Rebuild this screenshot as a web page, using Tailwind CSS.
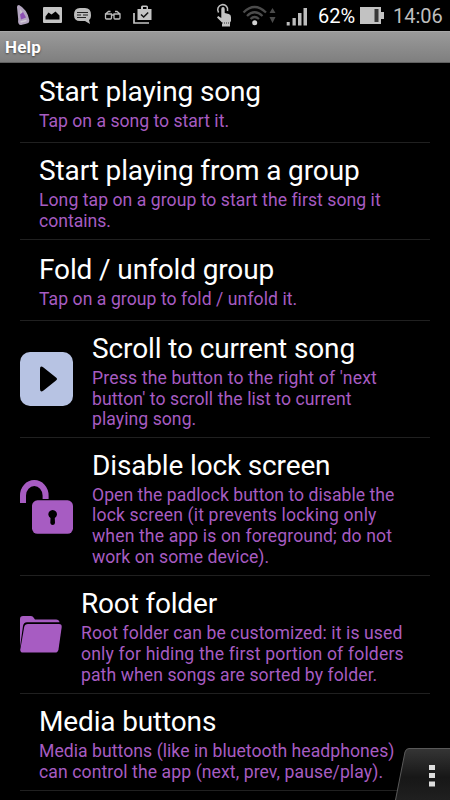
<!DOCTYPE html>
<html lang="en">
<head>
<meta charset="utf-8">
<title>Help</title>
<script src="https://cdn.jsdelivr.net/npm/@tailwindcss/browser@4"></script>
</head>
<body class="bg-black">
<div class="relative flex h-[800px] w-[450px] flex-col overflow-hidden bg-black font-[Roboto,sans-serif] text-white">
  <header class="flex h-[31px] shrink-0 items-center text-[#bebebe]">
    <svg class="h-[31px] w-[330px] shrink-0" viewBox="0 0 330 31" fill="none">
      <path d="M17 7Q17 5 19 5Q27 9 29.300 20Q29.500 23 27 23.500L21 25Q17.500 25 18.200 19Z" fill="#b3a5c0"/>
      <path d="M20 9l4 5-3.500 2z" fill="#c9c4ce"/><path d="M20 14.500l3-2.500 3 5.500-5 2z" fill="#8d50b4"/><path d="M20.500 22l6-1.500" stroke="#d2cdd6" stroke-width="1.500"/>
      <path fill="#c4c4c4" fill-rule="evenodd" d="M44 7h17q1 0 1 1v14q0 1-1 1H44q-1 0-1-1V8q0-1 1-1zM45.500 19.500h14v-4l-4-4-4 3-3-2-3 4z"/>
      <path fill="#bdbdbd" d="M80 8h5q6 0 6 7 0 4-2 5l1 4-5-3h-5q-6 0-6-6 0-7 6-7z"/>
      <path d="M77 12.500h11M77 15h4M83 15h5M77 17.500h9" stroke="#222" stroke-width="1.100"/>
      <path d="M105.500 14h6v4q0 1-1 1h-4q-1 0-1-1zM114 14h6v4q0 1-1 1h-4q-1 0-1-1zM111.500 15h2.500M105.500 14l3-2.500h2M120 14l-3-2.500h-2" stroke="#bdbdbd" stroke-width="1.300"/>
      <path d="M134 13v10h15" stroke="#c4c4c4" stroke-width="1.700"/>
      <path fill="#c4c4c4" fill-rule="evenodd" d="M137.500 9H141V7q0-1.500 1.500-1.500h4Q148 5.500 148 7v2h3.500v11h-14zM143 9h3.500V7H143z"/>
      <path d="M141 14.500l2.700 2.500 4.500-4.500" stroke="#111" stroke-width="1.500"/>
      <path d="M218.600 12.500A5 5 0 1 1 227.500 11" stroke="#bdbdbd" stroke-width="1.600"/>
      <path fill="#c4c4c4" d="M221.300 9q0-2 1.700-2T224.700 9v4l4 1q2.300.6 2.300 3v4l-1 1.500v4h-8v-4l-5-5 1.200-1.500 3.100 2z"/>
      <path d="M222 23h8.500" stroke="#333" stroke-dasharray="1 1"/>
      <g stroke="#4b4b4b" stroke-width="2.300"><path d="M243.500 12.500Q254.500 1.500 266 12.500M247 16Q254.500 8.500 262.500 16M250.500 19Q254.500 15 259 19"/></g>
      <circle cx="254.700" cy="22.700" r="2.500" fill="#d2d2d2"/>
      <path fill="#4b4b4b" d="M269.500 13l3-5 3 5zM269.500 17h6l-3 6z"/>
      <path fill="#bdbdbd" d="M286.700 22h3v3.500h-3zM292.500 18h3.300v7.500h-3.300zM298 13h3.500v12.500H298zM303.500 8h3.500v17.500h-3.500z"/>
    </svg>
    <span class="absolute left-[318px] top-[4px] text-[20px] leading-6 text-white">62%</span>
    <svg class="absolute left-[360px] top-[7px] h-[17px] w-6" viewBox="0 0 24 17"><path fill="#c2c2c2" d="M0 0h21v5h3v7h-3v5H0z"/><path fill="#383838" d="M14.500 2h4v13h-4z"/></svg>
    <span class="absolute left-[393px] top-[4px] text-[20px] leading-6">14:06</span>
  </header>
  <div class="flex h-8 shrink-0 items-center border-t border-b border-t-[#a8a8a8] border-b-[#606060] bg-linear-to-b from-[#9a9a9a] to-[#7f7f7f] pl-[5px] text-[17px] font-bold leading-5 tracking-[0.15px] [text-shadow:0_1px_2px_#444]">Help</div>
  <main class="flex flex-col px-5">
    <section class="flex h-20 shrink-0 items-center border-b border-[#202020] pl-[19px]">
      <div class="pt-[2px]"><h2 class="whitespace-nowrap text-[28px] leading-[33px] tracking-[-0.15px]">Start playing song</h2><p class="mt-[3px] whitespace-nowrap text-[17.6px] leading-[20.7px] text-[#a75cc2]">Tap on a song to start it.</p></div>
    </section>
    <section class="flex h-[97px] shrink-0 items-center border-b border-[#202020] pl-[19px]">
      <div class="pt-[3px]"><h2 class="whitespace-nowrap text-[28px] leading-[33px] tracking-[-0.12px]">Start playing from a group</h2><p class="mt-[3px] whitespace-nowrap text-[17.6px] leading-[20.7px] text-[#a75cc2]"><span class="tracking-[0.05px]">Long tap on a group to start the first song it</span><br>contains.</p></div>
    </section>
    <section class="flex h-[81px] shrink-0 items-center border-b border-[#202020] pl-[19px]">
      <div class="pt-[3px]"><h2 class="whitespace-nowrap text-[28px] leading-[33px] tracking-[-0.12px]">Fold / unfold group</h2><p class="mt-[3px] whitespace-nowrap text-[17.6px] leading-[20.7px] tracking-[0.06px] text-[#a75cc2]">Tap on a group to fold / unfold it.</p></div>
    </section>
    <section class="flex h-[117px] shrink-0 items-center gap-[19px] border-b border-[#202020]">
      <svg class="h-[54px] w-[53px] shrink-0" viewBox="0 0 53 54"><rect width="53" height="54" rx="10" fill="#b7c3e3"/><path d="M20 17Q20 13 23.500 15.500L36 25.500Q38 27 36 28.500L23.500 38.500Q20 41 20 37z"/></svg>
      <div class="pt-[4px]"><h2 class="whitespace-nowrap text-[28px] leading-[33px] tracking-[-0.12px]">Scroll to current song</h2><p class="mt-[3px] whitespace-nowrap text-[17.6px] leading-[20.7px] text-[#a75cc2]"><span class="tracking-[0.16px]">Press the button to the right of 'next</span><br><span class="tracking-[0.08px]">button' to scroll the list to current</span><br><span class="tracking-[0.06px]">playing song.</span></p></div>
    </section>
    <section class="flex h-[138px] shrink-0 items-center gap-[19px] border-b border-[#202020]">
      <svg class="h-[54px] w-[53px] shrink-0" viewBox="0 0 53 54"><path d="M3 23V15.500A11.300 12.500 0 0 1 25.600 15.500V19" fill="none" stroke="#a75cc2" stroke-width="6"/><rect x="12" y="20.300" width="41" height="33.500" rx="5.500" fill="#a75cc2"/><path d="M30.500 38A4.300 4.300 0 1 1 34.800 38L35 43Q34.700 45 32.700 45T30.300 43z"/></svg>
      <div class="pt-[3px]"><h2 class="whitespace-nowrap text-[28px] leading-[33px] tracking-[-0.15px]">Disable lock screen</h2><p class="mt-[3px] whitespace-nowrap text-[17.6px] leading-[20.7px] text-[#a75cc2]"><span class="tracking-[0.03px]">Open the padlock button to disable the</span><br><span class="tracking-[0.16px]">lock screen (it prevents locking only</span><br><span class="tracking-[0.13px]">when the app is on foreground; do not</span><br><span class="tracking-[0.05px]">work on some device).</span></p></div>
    </section>
    <section class="flex h-[118px] shrink-0 items-center gap-[19px] border-b border-[#202020]">
      <svg class="h-[37px] w-[42px] shrink-0" viewBox="0 0 42 37" fill="#a75cc2"><path d="M0 31V3Q0 0 3 0H11Q13 0 13.500 1.500L15 3.500H36Q39 3.500 39.500 6.300H7Q3.500 6.500 3 10z"/><path d="M8 8H39Q42 8 41.700 11L38.500 33.500Q38 36.600 35 36.600H3Q0 36.600.3 33.500L4.200 11Q4.800 8 8 8z"/></svg>
      <div class="pt-[4px]"><h2 class="whitespace-nowrap text-[28px] leading-[33px] tracking-[-0.18px]">Root folder</h2><p class="mt-[3px] whitespace-nowrap text-[17.6px] leading-[20.7px] text-[#a75cc2]"><span class="tracking-[0.1px]">Root folder can be customized: it is used</span><br><span class="tracking-[0.16px]">only for hiding the first portion of folders</span><br><span class="tracking-[0.08px]">path when songs are sorted by folder.</span></p></div>
    </section>
    <section class="flex h-[97px] shrink-0 items-center border-b border-[#202020] pl-[19px]">
      <div class="pt-[3px]"><h2 class="whitespace-nowrap text-[28px] leading-[33px] tracking-[-0.15px]">Media buttons</h2><p class="mt-[3px] whitespace-nowrap text-[17.6px] leading-[20.7px] text-[#a75cc2]"><span class="tracking-[0.05px]">Media buttons (like in bluetooth headphones)</span><br><span class="tracking-[0.09px]">can control the app (next, prev, pause/play).</span></p></div>
    </section>
  </main>
  <svg class="absolute bottom-0 right-0 h-[52px] w-[56px]" viewBox="0 0 56 52">
    <defs><linearGradient id="tab" x2="0" y2="1"><stop stop-color="#353535"/><stop offset=".55" stop-color="#171717"/><stop offset="1" stop-color="#202020"/></linearGradient></defs>
    <path d="M1.500 52L11 4Q12 .5 15 .5H57V53H1.500z" fill="url(#tab)" stroke="#595959"/>
    <path d="M35 17h6v5h-6zM35 25h6v5h-6zM35 33.500h6v5h-6z" fill="#ddd"/>
  </svg>
</div>
</body>
</html>
